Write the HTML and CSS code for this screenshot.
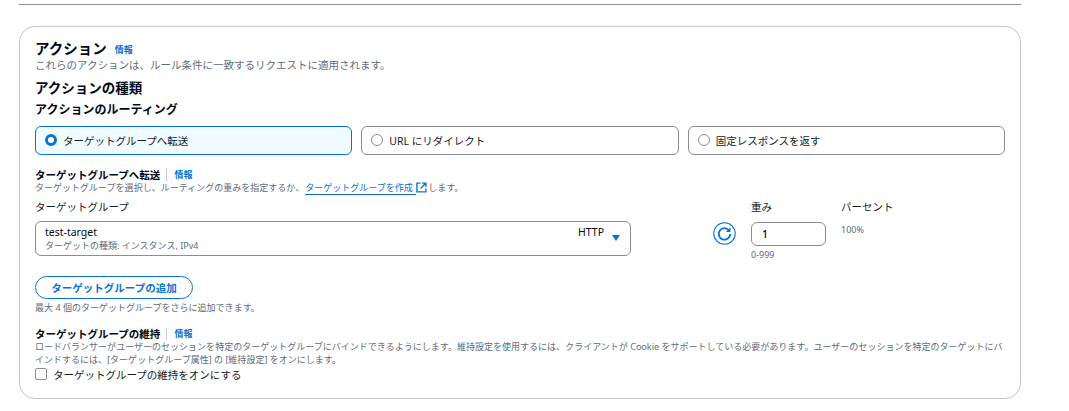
FILE: index.html
```html
<!DOCTYPE html>
<html lang="ja">
<head>
<meta charset="utf-8">
<title>アクション</title>
<link rel="stylesheet" href="styles.css">
</head>
<body>
<div class="page">
  <hr class="rule">
  <section class="card">
    <div class="head">
      <h2 class="title">アクション</h2>
      <a class="info info-head">情報</a>
    </div>
    <p class="desc desc-main">これらのアクションは、ルール条件に一致するリクエストに適用されます。</p>
    <h3 class="h-type">アクションの種類</h3>
    <h4 class="h-routing">アクションのルーティング</h4>
    <div class="tiles">
      <label class="tile tile-on"><span class="radio radio-on"></span><span>ターゲットグループへ転送</span></label>
      <label class="tile"><span class="radio"></span><span>URL にリダイレクト</span></label>
      <label class="tile"><span class="radio"></span><span>固定レスポンスを返す</span></label>
    </div>
    <div class="sub-head">
      <span class="sub-title">ターゲットグループへ転送</span><span class="sep"></span><a class="info">情報</a>
    </div>
    <p class="desc desc-fwd">ターゲットグループを選択し、ルーティングの重みを指定するか、<a class="ext">ターゲットグループを作成 </a><svg class="ext-icon" viewBox="0 0 12 12" width="11" height="11"><path d="M5 1.2H1v9.6h9.8V7" fill="none" stroke="#0972d3" stroke-width="1.5"/><path d="M6.5 1.2h4.3v4.3M10.6 1.4 5 7" fill="none" stroke="#0972d3" stroke-width="1.5"/></svg>します。</p>
    <div class="tg-row">
      <div class="tg-col">
        <div class="label">ターゲットグループ</div>
        <div class="select">
          <div class="select-text">
            <div class="select-main">test-target</div>
            <div class="select-sub">ターゲットの種類: インスタンス, IPv4</div>
          </div>
          <span class="select-tag">HTTP</span>
          <svg class="caret" viewBox="0 0 8 6" width="8" height="6"><path d="M0 0h8L4 6z" fill="#0972d3"/></svg>
        </div>
      </div>
      <button class="refresh" aria-label="更新">
        <svg viewBox="0 0 24 24" width="23" height="23"><circle cx="12" cy="12" r="11.2" fill="none" stroke="#0972d3" stroke-width="1.1"/><path d="M16.8 8.8A6 6 0 1 0 18 12.5" fill="none" stroke="#0972d3" stroke-width="1.9"/><path d="M18.2 5.6v4.8h-4.8z" fill="#0972d3"/></svg>
      </button>
      <div class="weight-col">
        <div class="label">重み</div>
        <div class="input">1</div>
        <div class="hint">0-999</div>
      </div>
      <div class="pct-col">
        <div class="label">パーセント</div>
        <div class="pct">100%</div>
      </div>
    </div>
    <button class="add">ターゲットグループの追加</button>
    <p class="desc desc-add">最大 4 個のターゲットグループをさらに追加できます。</p>
    <div class="sub-head sub-head-stick">
      <span class="sub-title">ターゲットグループの維持</span><span class="sep"></span><a class="info">情報</a>
    </div>
    <p class="desc desc-stick">ロードバランサーがユーザーのセッションを特定のターゲットグループにバインドできるようにします。維持設定を使用するには、クライアントが Cookie をサポートしている必要があります。ユーザーのセッションを特定のターゲットにバインドするには、[ターゲットグループ属性] の [維持設定] をオンにします。</p>
    <label class="check"><span class="box"></span><span>ターゲットグループの維持をオンにする</span></label>
  </section>
</div>
</body>
</html>
```
FILE: styles.css
```css
* { box-sizing: border-box; }
html, body { margin: 0; padding: 0; background: #fff; }
body {
  font-family: "Noto Sans", "Noto Sans CJK JP", sans-serif;
  color: #000716;
  font-size: 10.5px;
  height: 411px;
  overflow: hidden;
}
.page { width: 1002px; margin-left: 19px; padding-top: 4px; }
.rule { margin: 0 0 21px; border: 0; border-top: 1px solid #8f9193; height: 0; }
.card {
  height: 373px;
  border: 1px solid #c6c6cd;
  border-radius: 16px;
  padding: 10px 15px 0;
}
p, h2, h3, h4 { margin: 0; }
.head { display: flex; align-items: center; gap: 8px; height: 20px; }
.title { font-size: 14.5px; font-weight: 700; line-height: 20px; padding-top: 2px; }
.info { color: #0972d3; font-size: 9px; font-weight: 700; line-height: 12px; }
.info-head { position: relative; top: 3px; }
.desc { color: #5f6b7a; font-size: 9.03px; line-height: 12px; }
.desc-main { font-size: 10.5px; line-height: 14px; margin-top: 1px; }
.h-type { font-size: 13.5px; line-height: 18px; font-weight: 700; margin-top: 7px; }
.h-routing { font-size: 12px; line-height: 18px; font-weight: 700; margin-top: 4px; }
.tiles { display: grid; grid-template-columns: repeat(3, 1fr); gap: 9px; margin-top: 7px; }
.tile {
  display: flex; align-items: center; gap: 6px;
  height: 29px; padding: 0 9px 1px;
  border: 1px solid #8c8c94; border-radius: 6px;
  font-size: 10.5px; color: #16191f;
}
.tile-on { background: #f0fbff; border-color: #0972d3; }
.radio { width: 12px; height: 12px; border-radius: 50%; border: 1.5px solid #8c8c94; background: #fff; flex: none; }
.radio-on { border: 3.5px solid #0972d3; }
.sub-head { display: flex; align-items: center; height: 14px; margin-top: 13px; }
.sub-title { font-size: 10.5px; font-weight: 700; line-height: 14px; }
.sep { width: 1px; height: 12px; background: #c6c6cd; margin: 0 7px 0 6px; }
.desc-fwd { line-height: 13px; height: 13px; white-space: nowrap; display: flex; align-items: center; margin-top: -1px; }
.ext { color: #0972d3; border-bottom: 1px solid #0972d3; white-space: pre; margin-left: 1px; padding-right: 1px; }
.ext-icon { flex: none; margin: 0 1px 0 0; }
.tg-row { display: flex; align-items: flex-start; margin-top: 6px; }
.label { font-size: 10.5px; line-height: 14px; color: #16191f; }
.tg-col { width: 596px; }
.select {
  display: flex; align-items: flex-start; margin-top: 7px;
  height: 35px; border: 1px solid #8c8c94; border-radius: 6px; padding: 4px 10px 0 9px;
}
.select-text { flex: 1; }
.select-main { font-size: 10.5px; line-height: 13px; }
.select-sub { font-size: 9px; line-height: 12px; color: #5f6b7a; margin-top: 1px; }
.select-tag { font-size: 10.5px; line-height: 13px; }
.caret { margin: 9px 0 0 8px; }
.refresh { border: 0; background: none; padding: 0; margin: 22px 15px 0 82px; width: 23px; height: 23px; flex: none; }
.refresh svg { display: block; }
.weight-col { width: 75px; flex: none; }
.input {
  height: 24px; margin-top: 8px; border: 1px solid #8c8c94; border-radius: 6px;
  padding-left: 10px; font-size: 10.5px; line-height: 22px; font-weight: 500;
}
.hint { font-size: 9px; line-height: 12px; color: #5f6b7a; margin-top: 3px; }
.pct-col { margin-left: 15px; }
.pct { font-size: 9px; line-height: 12px; color: #5f6b7a; margin-top: 10px; }
.add {
  display: block; width: 158px; height: 23px; margin-top: 15px; padding: 0;
  border: 1px solid #0972d3; border-radius: 12px; background: #fff;
  color: #0972d3; font: 700 10.5px "Noto Sans", "Noto Sans CJK JP", sans-serif;
}
.desc-add { margin-top: 3px; }
.sub-head-stick { margin-top: 13px; }
.desc-stick { margin-top: -1px; line-height: 13px; }
.check { display: flex; align-items: center; gap: 6px; font-size: 10.5px; margin-top: 0; height: 16px; color: #16191f; }
.box { width: 12px; height: 12px; border: 1.5px solid #8c8c94; border-radius: 2px; flex: none; }
```
